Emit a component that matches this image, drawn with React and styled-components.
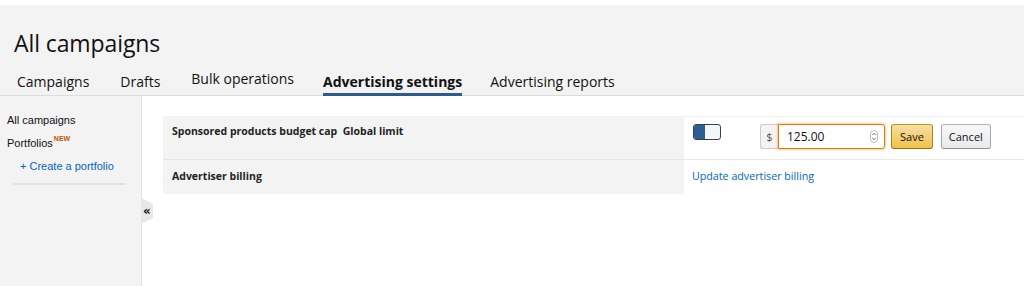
import React from "react";
import styled, { createGlobalStyle } from "styled-components";

const Global = createGlobalStyle`
  html, body { margin: 0; padding: 0; background: #fff; }
  body { font-family: "Open Sans", "Liberation Sans", sans-serif; color: #111; }
  #root { height: 286px; overflow: hidden; }
`;

const Page = styled.div`
  display: flex;
  flex-direction: column;
  height: 286px;
  padding-top: 5px;
  box-sizing: border-box;
`;

const Header = styled.header`
  background: #f3f3f3;
  height: 91px;
  border-bottom: 1px solid #dcdcdc;
  box-sizing: border-box;
  display: flex;
  flex-direction: column;
`;

const Title = styled.h1`
  margin: 0;
  padding: 23px 0 0 14px;
  font-size: 23px;
  font-weight: 400;
  line-height: 30px;
  color: #111;
  letter-spacing: -0.1px;
`;

const Tabs = styled.nav`
  display: flex;
  padding: 14px 0 0 17px;
`;

const Tab = styled.div`
  font-size: 14px;
  line-height: 19px;
  font-weight: ${(p) => (p.$active ? 700 : 400)};
  color: #111;
  margin-right: ${(p) => p.$gap}px;
  padding-bottom: 2px;
  border-bottom: 3px solid ${(p) => (p.$active ? "#2d5b8b" : "transparent")};
  margin-top: ${(p) => (p.$raised ? -3 : 0)}px;
  white-space: nowrap;
`;

const Body = styled.div`
  display: flex;
  flex: 1;
`;

const Sidebar = styled.aside`
  position: relative;
  width: 142px;
  flex: none;
  background: #f3f3f3;
  border-right: 1px solid #e3e3e3;
  padding: 17px 0 0 7px;
  box-sizing: border-box;
  font-family: "Liberation Sans", Arial, sans-serif;
  font-size: 11px;
`;

const SideItem = styled.div`
  color: #111;
  line-height: 14px;
  height: 14px;
  margin-bottom: 9px;
`;

const NewBadge = styled.span`
  position: relative;
  top: -6px;
  line-height: 0;
  color: #c45500;
  font-size: 7px;
  font-weight: 700;
  margin-left: 1px;
`;

const SideLink = styled.a`
  display: block;
  color: #0066c0;
  padding-left: 13px;
  line-height: 14px;
  margin-bottom: 10px;
  text-decoration: none;
`;

const Divider = styled.hr`
  margin: 0 15px 0 6px;
  border: none;
  border-top: 2px solid #e2e2e2;
`;

const Collapse = styled.div`
  position: absolute;
  right: -12px;
  top: 102px;
  width: 12px;
  height: 26px;
  background: #e7e7e7;
  clip-path: polygon(0 0, 100% 22%, 100% 78%, 0 100%);
  display: flex;
  align-items: center;
  justify-content: center;
  font-size: 12px;
  font-weight: 700;
  color: #111;
  font-family: "DejaVu Sans", sans-serif;
`;

const Main = styled.main`
  flex: 1;
  padding: 20px 0 0 21px;
`;

const Table = styled.div`
  display: grid;
  grid-template-columns: 521px 1fr;
`;

const LabelCell = styled.div`
  background: #f3f3f3;
  height: ${(p) => p.$h}px;
  padding: ${(p) => p.$pt}px 0 0 9px;
  box-sizing: border-box;
  border-bottom: 1px solid ${(p) => (p.$last ? "transparent" : "#e6e6e6")};
  font-size: 10.5px;
  font-weight: 700;
  color: #222;
  white-space: pre;
`;

const ValueCell = styled.div`
  height: ${(p) => p.$h}px;
  padding: ${(p) => p.$pt}px 0 0 8px;
  box-sizing: border-box;
  border-bottom: 1px solid ${(p) => (p.$last ? "transparent" : "#eaeaea")};
  border-top: ${(p) => (p.$first ? "1px solid #f0f0f0" : "none")};
  display: flex;
  align-items: flex-start;
`;

const Toggle = styled.div`
  width: 28px;
  height: 16px;
  border: 1px solid #3a3f47;
  border-radius: 3px;
  box-sizing: border-box;
  display: flex;
  overflow: hidden;
  background: #f3f6f9;
  margin-left: 1px;
  margin-right: 39px;
`;

const ToggleFill = styled.div`
  width: 11px;
  background: #2b5e91;
`;

const InputGroup = styled.div`
  display: flex;
  height: 25px;
`;

const Prefix = styled.div`
  width: 18px;
  border: 1px solid #ccc;
  border-right: none;
  border-radius: 3px 0 0 3px;
  background: #f3f3f3;
  color: #555;
  font-size: 11px;
  display: flex;
  align-items: center;
  justify-content: center;
  box-sizing: border-box;
`;

const Input = styled.div`
  width: 107px;
  border: 1px solid #e77600;
  border-radius: 0 3px 3px 0;
  box-shadow: 0 0 2px 1px rgba(228, 121, 17, 0.35);
  box-sizing: border-box;
  display: flex;
  align-items: center;
  justify-content: space-between;
  padding: 0 6px 0 8px;
  font-size: 12px;
  color: #111;
`;

const Spinner = styled.svg`
  width: 8px;
  height: 13px;
`;

const Button = styled.button`
  height: 25px;
  margin-left: ${(p) => p.$ml}px;
  padding: 0 ${(p) => p.$px}px;
  border-radius: 3px;
  font-family: "Open Sans", sans-serif;
  font-size: 11px;
  color: #111;
  border: 1px solid;
  border-color: ${(p) => (p.$primary ? "#c89411 #b0820f #99710d" : "#adb1b8 #a2a6ac #8d9096")};
  background: ${(p) =>
    p.$primary
      ? "linear-gradient(to bottom, #f7dfa5, #f0c14b)"
      : "linear-gradient(to bottom, #f7f8fa, #e7e9ec)"};
  cursor: pointer;
`;

const Link = styled.a`
  color: #0066c0;
  font-size: 10.7px;
  text-decoration: none;
`;

export default function App() {
  return (
    <>
      <Global />
      <Page>
        <Header>
          <Title>All campaigns</Title>
          <Tabs>
            <Tab $gap={31}>Campaigns</Tab>
            <Tab $gap={31}>Drafts</Tab>
            <Tab $gap={29} $raised>Bulk operations</Tab>
            <Tab $gap={28} $active>Advertising settings</Tab>
            <Tab $gap={0}>Advertising reports</Tab>
          </Tabs>
        </Header>
        <Body>
          <Sidebar>
            <SideItem>All campaigns</SideItem>
            <SideItem>
              Portfolios<NewBadge>NEW</NewBadge>
            </SideItem>
            <SideLink>+ Create a portfolio</SideLink>
            <Divider />
            <Collapse>«</Collapse>
          </Sidebar>
          <Main>
            <Table>
              <LabelCell $h={44} $pt={8}>{"Sponsored products budget cap  Global limit"}</LabelCell>
              <ValueCell $h={44} $pt={7} $first>
                <Toggle>
                  <ToggleFill />
                </Toggle>
                <InputGroup>
                  <Prefix>$</Prefix>
                  <Input>
                    <span>125.00</span>
                    <Spinner viewBox="0 0 8 13">
                      <rect x="0.5" y="0.5" width="7" height="12" rx="3.5" fill="none" stroke="#bbb" />
                      <path d="M2.3 5 L4 3.3 L5.7 5 M2.3 8 L4 9.7 L5.7 8" fill="none" stroke="#555" strokeWidth="0.9" />
                    </Spinner>
                  </Input>
                  <Button $primary $ml={6} $px={8}>Save</Button>
                  <Button $ml={8} $px={7}>Cancel</Button>
                </InputGroup>
              </ValueCell>
              <LabelCell $h={34} $pt={9} $last>Advertiser billing</LabelCell>
              <ValueCell $h={34} $pt={9} $last>
                <Link>Update advertiser billing</Link>
              </ValueCell>
            </Table>
          </Main>
        </Body>
      </Page>
    </>
  );
}
